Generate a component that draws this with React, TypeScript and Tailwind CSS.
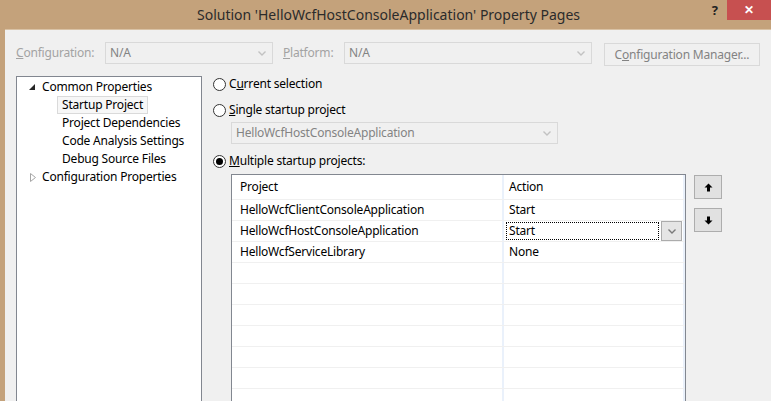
import type { ReactNode } from "react";

const font = { fontFamily: '"Noto Sans", "Open Sans", sans-serif' };

function Chevron({ color = "#c2c2c2" }: { color?: string }) {
  return (
    <svg width="8" height="5" viewBox="0 0 8 5" className="shrink-0">
      <polyline points="0.5,0.5 4,4 7.5,0.5" fill="none" stroke={color} strokeWidth="1.4" />
    </svg>
  );
}

function Combo({ text, className }: { text: string; className: string }) {
  return (
    <div
      className={`flex h-[22px] items-center justify-between border border-[#d9d9d9] bg-[#f0f0f0] pl-[4px] pr-[6px] text-[#838383] ${className}`}
    >
      <span>{text}</span>
      <Chevron />
    </div>
  );
}

function Radio({ checked, children }: { checked?: boolean; children: ReactNode }) {
  return (
    <div className="flex h-[18px] items-center">
      <span className="flex h-[13px] w-[13px] items-center justify-center rounded-full border border-[#333] bg-white">
        {checked && <span className="h-[7px] w-[7px] rounded-full bg-black" />}
      </span>
      <span className="ml-[3px] text-black">{children}</span>
    </div>
  );
}

function Arrow({ down }: { down?: boolean }) {
  return (
    <svg width="9" height="9" viewBox="0 0 9 9" className={down ? "rotate-180" : ""}>
      <path d="M4.5 0.5 L8.5 4.5 H6 V8.5 H3 V4.5 H0.5 Z" fill="#000" />
    </svg>
  );
}

const rows = [
  { project: "HelloWcfClientConsoleApplication", action: "Start" },
  { project: "HelloWcfHostConsoleApplication", action: "Start", focus: true },
  { project: "HelloWcfServiceLibrary", action: "None" },
  { project: "", action: "" },
  { project: "", action: "" },
  { project: "", action: "" },
  { project: "", action: "" },
  { project: "", action: "" },
  { project: "", action: "" },
  { project: "", action: "" },
];

const treeChildren = ["Startup Project", "Project Dependencies", "Code Analysis Settings", "Debug Source Files"];

export default function App() {
  return (
    <div
      style={font}
      className="flex h-[401px] w-[771px] flex-col overflow-hidden bg-[#c4a27b] text-[12px] leading-none tracking-[-0.2px]"
    >
      {/* title bar */}
      <div className="relative flex h-[29px] shrink-0 items-center justify-center tracking-normal">
        <span className="ml-[6px] text-[14px] text-[#2b2b2b]">Solution 'HelloWcfHostConsoleApplication' Property Pages</span>
        <div className="absolute right-0 top-0 flex items-start">
          <span className="mr-[9px] mt-[4px] text-[13px] font-bold text-[#222]">?</span>
          <div className="flex h-[20px] w-[44px] items-center justify-center bg-[#c75050] text-[12px] font-bold text-white">
            ✕
          </div>
        </div>
      </div>

      {/* window body */}
      <div className="ml-[5px] flex flex-1 flex-col border-t border-[#d9c2a5] bg-[#f0f0f0]">
        <div className="mt-[12px] flex items-start pl-[11px]">
          <div className="flex h-[22px] w-[89px] items-center text-[#a3a3a3]">
            <span>
              <span className="underline">C</span>onfiguration:
            </span>
          </div>
          <Combo text="N/A" className="w-[168px]" />
          <div className="ml-[10px] flex h-[22px] w-[61px] items-center text-[#a3a3a3]">
            <span>
              <span className="underline">P</span>latform:
            </span>
          </div>
          <Combo text="N/A" className="w-[248px]" />
          <div className="ml-[12px] mt-[1px] flex h-[23px] w-[156px] items-center justify-center border border-[#d9d9d9] bg-[#f0f0f0] text-[#838383]">
            <span>
              C<span className="underline">o</span>nfiguration Manager...
            </span>
          </div>
        </div>

        <div className="mt-[10px] flex flex-1 items-start pl-[11px]">
          {/* tree */}
          <div className="h-[340px] w-[186px] shrink-0 border border-[#828790] bg-white pt-[1px] text-black">
            <div className="flex h-[18px] items-center">
              <svg width="6" height="6" viewBox="0 0 6 6" className="ml-[12px] mr-[7px]">
                <polygon points="6,0 6,6 0,6" fill="#262626" />
              </svg>
              <span>Common Properties</span>
            </div>
            {treeChildren.map((c, i) => (
              <div key={c} className="flex h-[18px] items-center">
                <span
                  className={`ml-[40px] flex h-[18px] items-center px-[4px] ${
                    i === 0 ? "border border-[#dadada] bg-[#f7f7f7]" : "border border-transparent"
                  }`}
                >
                  {c}
                </span>
              </div>
            ))}
            <div className="flex h-[18px] items-center">
              <svg width="6" height="9" viewBox="0 0 6 9" className="ml-[13px] mr-[6px]">
                <polygon points="0.5,0.5 5.5,4.5 0.5,8.5" fill="none" stroke="#a6a6a6" strokeWidth="1" />
              </svg>
              <span>Configuration Properties</span>
            </div>
          </div>

          {/* right panel */}
          <div className="ml-[11px] flex flex-1 flex-col">
            <div className="-mt-[1px]">
              <Radio>
                C<span className="underline">u</span>rrent selection
              </Radio>
            </div>
            <div className="mt-[8px]">
              <Radio>
                <span className="underline">S</span>ingle startup project
              </Radio>
            </div>
            <div className="ml-[18px] mt-[3px]">
              <Combo text="HelloWcfHostConsoleApplication" className="w-[327px]" />
            </div>
            <div className="mt-[8px]">
              <Radio checked>
                <span className="underline">M</span>ultiple startup projects:
              </Radio>
            </div>

            <div className="ml-[18px] mt-[4px] flex items-start">
              {/* grid */}
              <div className="h-[260px] w-[455px] border border-[#828790] bg-white text-black">
                <div className="flex h-[25px] border-b border-[#f0f0f0]">
                  <div className="flex w-[270px] items-center pl-[8px]">Project</div>
                  <div className="w-[2px] bg-[#eaf1fb]" />
                  <div className="flex flex-1 items-center border-r-2 border-[#eaf1fb] pl-[5px]">Action</div>
                </div>
                {rows.map((r, i) => (
                  <div key={i} className="flex h-[21px] border-b border-[#f0f0f0]">
                    <div className="flex w-[270px] items-center pl-[8px]">{r.project}</div>
                    <div className="w-[2px] bg-[#eaf1fb]" />
                    {r.focus ? (
                      <div className="flex flex-1 items-center border-r-2 border-[#eaf1fb] pl-[2px]">
                        <div className="flex h-[18px] w-[153px] items-center border border-dotted border-black pl-[2px]">
                          {r.action}
                        </div>
                        <div className="ml-[2px] flex h-[20px] w-[21px] items-center justify-center border border-[#acacac] bg-[#e5e5e5]">
                          <Chevron color="#7a7a7a" />
                        </div>
                      </div>
                    ) : (
                      <div className="flex flex-1 items-center border-r-2 border-[#eaf1fb] pl-[5px]">{r.action}</div>
                    )}
                  </div>
                ))}
              </div>

              {/* move buttons */}
              <div className="ml-[8px] flex flex-col gap-[9px] pt-[1px]">
                <div className="flex h-[24px] w-[28px] items-center justify-center border border-[#adadad] bg-[#e1e1e1]">
                  <Arrow />
                </div>
                <div className="flex h-[24px] w-[28px] items-center justify-center border border-[#adadad] bg-[#e1e1e1]">
                  <Arrow down />
                </div>
              </div>
            </div>
          </div>
        </div>
      </div>
    </div>
  );
}
